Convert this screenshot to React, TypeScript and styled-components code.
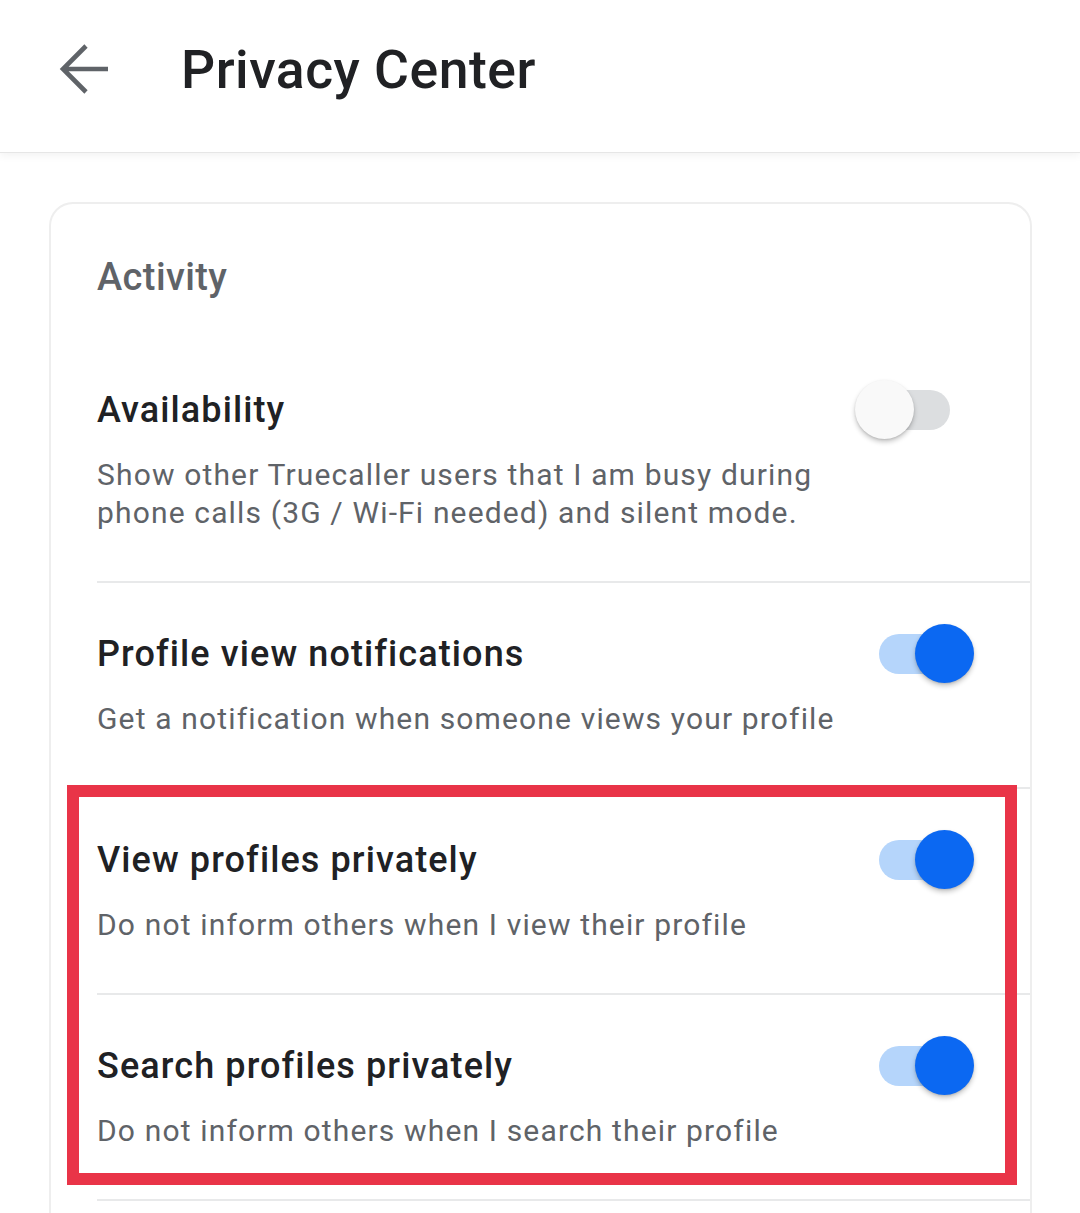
import React from "react";
import styled, { createGlobalStyle } from "styled-components";

const GlobalStyle = createGlobalStyle`
  html, body {
    margin: 0;
    padding: 0;
    background: #ffffff;
  }
  body {
    font-family: Roboto, "Noto Sans", "Liberation Sans", sans-serif;
    -webkit-font-smoothing: antialiased;
  }
`;

const Page = styled.div`
  width: 1080px;
  height: 1213px;
  background: #ffffff;
  overflow: hidden;
`;

const TopBar = styled.header`
  height: 152px;
  display: flex;
  align-items: center;
  padding-left: 49px;
  background: #ffffff;
  border-bottom: 1px solid #e6e6e6;
  box-shadow: 0 3px 8px rgba(0, 0, 0, 0.05);
  position: relative;
  z-index: 1;
`;

const BackButton = styled.button`
  width: 72px;
  height: 72px;
  margin-top: -12px;
  padding: 0;
  border: 0;
  background: transparent;
  display: flex;
  align-items: center;
  justify-content: center;
  color: #5f6368;
`;

const Title = styled.h1`
  margin: -12px 0 0 60px;
  font-size: 53.5px;
  font-weight: 500;
  line-height: 64px;
  color: #202124;
  letter-spacing: 0.5px;
`;

const Content = styled.main`
  padding: 49px 48px 0 49px;
`;

const Card = styled.section`
  border: 2px solid #eeeeee;
  border-bottom: 0;
  border-radius: 24px 24px 0 0;
  padding: 50px 0 60px;
  background: #ffffff;
`;

const SectionLabel = styled.h2`
  margin: 0 0 39px 46px;
  font-size: 38px;
  line-height: 46px;
  font-weight: 500;
  color: #5f6368;
  letter-spacing: 0.4px;
`;

const Row = styled.div`
  margin-left: 46px;
  padding: 49px 55px 49px 0;
  border-bottom: 2px solid #e8e9ea;
  display: grid;
  grid-template-columns: 1fr 120px;
  column-gap: 0;
  row-gap: 24px;
  align-items: center;
`;

const RowTitle = styled.div`
  font-size: 36px;
  line-height: 44px;
  font-weight: 500;
  color: #202124;
  letter-spacing: 1.1px;
`;

const RowText = styled.div`
  grid-column: 1 / 2;
  font-size: 30px;
  line-height: 38px;
  font-weight: 400;
  color: #5f6368;
  letter-spacing: 1.15px;
`;

const Highlighted = styled.div`
  position: relative;
`;

/* Red annotation frame drawn over the grouped rows */
const Frame = styled.div`
  position: absolute;
  top: -4px;
  left: 16px;
  right: 13px;
  bottom: 16px;
  border: 12px solid #e93448;
  pointer-events: none;
`;

/* The switch keeps the title line height; the thumb overhangs it */
const SwitchBox = styled.div`
  position: relative;
  width: 120px;
  height: 44px;
`;

const Track = styled.div<{ $on: boolean }>`
  position: absolute;
  left: 24px;
  top: 2px;
  width: 71px;
  height: 40px;
  border-radius: 20px;
  background: ${(p) => (p.$on ? "#b5d5fb" : "#dcdee0")};
`;

const Thumb = styled.div<{ $on: boolean }>`
  position: absolute;
  top: -8px;
  left: ${(p) => (p.$on ? "60px" : "0")};
  width: 59px;
  height: 59px;
  border-radius: 50%;
  background: ${(p) => (p.$on ? "#0b68f2" : "#f9f9f9")};
  box-shadow: 0 3px 5px rgba(0, 0, 0, 0.22), 0 1px 2px rgba(0, 0, 0, 0.1);
`;

function Switch({ on }: { on: boolean }) {
  return (
    <SwitchBox role="switch" aria-checked={on}>
      <Track $on={on} />
      <Thumb $on={on} />
    </SwitchBox>
  );
}

function BackArrow() {
  return (
    <svg width="72" height="72" viewBox="0 0 72 72" fill="none">
      <path
        d="M59 35H14M37 12L14 35L37 58"
        stroke="currentColor"
        strokeWidth="4.6"
        strokeLinecap="butt"
        strokeLinejoin="miter"
      />
    </svg>
  );
}

type Setting = { title: string; text: string; on: boolean };

const settings: Setting[] = [
  {
    title: "Availability",
    text: "Show other Truecaller users that I am busy during phone calls (3G / Wi-Fi needed) and silent mode.",
    on: false,
  },
  {
    title: "Profile view notifications",
    text: "Get a notification when someone views your profile",
    on: true,
  },
  {
    title: "View profiles privately",
    text: "Do not inform others when I view their profile",
    on: true,
  },
  {
    title: "Search profiles privately",
    text: "Do not inform others when I search their profile",
    on: true,
  },
];

function SettingRow({ s }: { s: Setting }) {
  return (
    <Row>
      <RowTitle>{s.title}</RowTitle>
      <Switch on={s.on} />
      <RowText>{s.text}</RowText>
    </Row>
  );
}

export default function App() {
  return (
    <Page>
      <GlobalStyle />
      <TopBar>
        <BackButton aria-label="Back">
          <BackArrow />
        </BackButton>
        <Title>Privacy Center</Title>
      </TopBar>
      <Content>
        <Card>
          <SectionLabel>Activity</SectionLabel>
          <SettingRow s={settings[0]} />
          <SettingRow s={settings[1]} />
          <Highlighted>
            <SettingRow s={settings[2]} />
            <SettingRow s={settings[3]} />
            <Frame />
          </Highlighted>
        </Card>
      </Content>
    </Page>
  );
}
